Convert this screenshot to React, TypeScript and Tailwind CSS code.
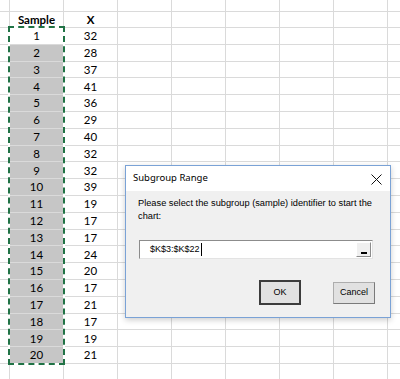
import React from 'react';

const samples = [32, 28, 37, 41, 36, 29, 40, 32, 32, 39, 19, 17, 17, 24, 20, 17, 21, 17, 19, 21];

const COLS = 7;

const Row: React.FC<{ h: string; cells?: React.ReactNode[]; grayFirst?: boolean; bold?: boolean }> = ({ h, cells = [], grayFirst, bold }) => (
    <div className={`flex ${h}`}>
        <div className="w-[10px] shrink-0 border-r border-b border-[#dadada]" />
        {Array.from({ length: COLS }).map((_, i) => (
            <div
                key={i}
                className={`w-[54px] shrink-0 border-r border-b border-[#dadada] flex items-center justify-center text-[11.5px] text-black ${i === 0 && grayFirst ? 'bg-[#c6c6c6]' : ''} ${bold ? 'font-bold' : ''}`}
            >
                {cells[i]}
            </div>
        ))}
        <div className="flex-1 border-b border-[#dadada]" />
    </div>
);

export default function App() {
    return (
        <div className="relative w-[400px] h-[379px] overflow-hidden bg-white" style={{ fontFamily: 'Lato, "Open Sans", sans-serif' }}>
            <Row h="h-[12px]" />
            <Row h="h-[16px]" cells={['Sample', 'X']} bold />
            {samples.map((x, i) => (
                <Row key={i} h="h-[16.8px]" cells={[i + 1, x]} grayFirst={i > 0} />
            ))}
            <Row h="h-[20px]" />

            {/* marching ants selection */}
            <div className="absolute left-[8px] top-[26px] w-[57px] h-[339px] border-2 border-white" />
            <div className="absolute left-[8px] top-[26px] w-[57px] h-[339px] border-2 border-dashed border-[#217346]" />

            {/* dialog */}
            <div
                className="absolute left-[125px] top-[165px] w-[266px] h-[153px] border border-[#7aa2d6] bg-[#f0f0f0] shadow-[0_2px_6px_rgba(0,0,0,0.2)] flex flex-col"
                style={{ fontFamily: '"Liberation Sans", Arial, sans-serif' }}
            >
                <div className="h-[25px] bg-white flex items-center justify-between pl-[7px] pr-[8px]">
                    <span className="text-[9.5px] text-black" style={{ fontFamily: '"Noto Sans", sans-serif' }}>Subgroup Range</span>
                    <svg width="11" height="11" viewBox="0 0 11 11" className="mt-[1px]">
                        <path d="M0.5 0.5 L10.5 10.5 M10.5 0.5 L0.5 10.5" stroke="#111" strokeWidth="1" fill="none" />
                    </svg>
                </div>
                <div className="pl-[12px] pr-[2px] pt-[6px] text-[9.25px] leading-[13px] text-black whitespace-nowrap">
                    Please select the subgroup (sample) identifier to start the
                    <br />
                    chart:
                </div>
                <div className="mt-[17px] ml-[13px] w-[234px] h-[19px] flex border-t border-l border-[#8c8c8c] border-r border-b border-r-[#e3e3e3] border-b-[#e3e3e3] bg-white">
                    <div className="flex-1 flex items-center pl-[10px] text-[9px] text-black">
                        $K$3:$K$22
                        <span className="w-px h-[13px] bg-black ml-[1px]" />
                    </div>
                    <div className="w-[15px] my-[1px] mr-[1px] bg-[#f0f0f0] border-r border-b border-[#8c8c8c] border-t border-l border-t-white border-l-white flex items-end justify-center pb-[2px]">
                        <span className="w-[6px] h-[2px] bg-black" />
                    </div>
                </div>
                <div className="flex items-start mt-[21px] ml-[133px] gap-[32px]">
                    <button className="w-[42px] h-[25px] border-2 border-[#3c3c3c] bg-[#e1e1e1] text-[9px] text-black flex items-center justify-center">
                        OK
                    </button>
                    <button className="mt-[2px] w-[42px] h-[22px] border border-[#adadad] border-r-[#7a7a7a] border-b-[#7a7a7a] bg-[#e1e1e1] text-[9px] text-black flex items-center justify-center">
                        Cancel
                    </button>
                </div>
            </div>
        </div>
    );
}
